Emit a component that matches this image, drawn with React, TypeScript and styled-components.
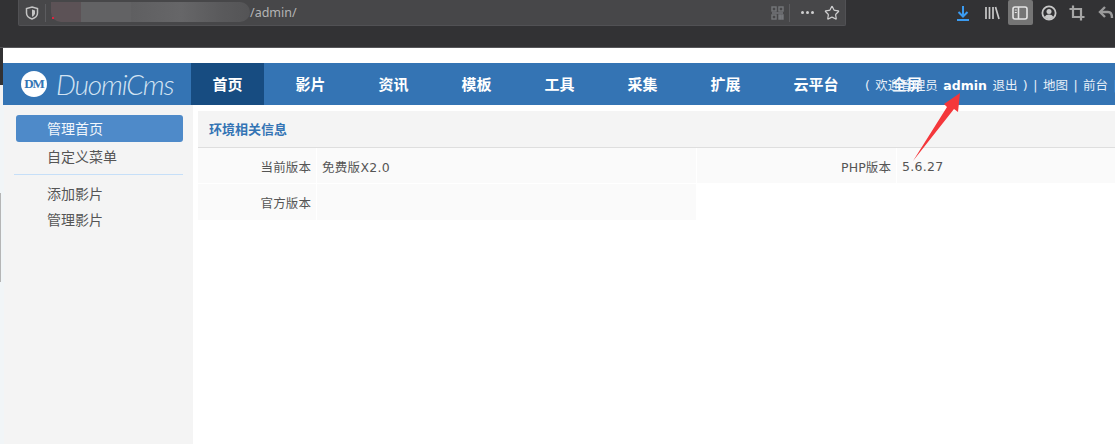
import React from "react"
import styled, { createGlobalStyle } from "styled-components"
import { Star } from "lucide-react"

const navItems = ["首页", "影片", "资讯", "模板", "工具", "采集", "扩展", "云平台", "全屏"]

export default function App() {
  return (
    <Page>
      <GlobalStyle />
      <BrowserBar>
        <UrlBox>
          <ShieldIcon />
          <UrlDivider />
          <BlurredHost />
          <UrlPath>/admin/</UrlPath>
          <QrIcon />
          <UrlDivider $right />
          <Dots>
            <i />
            <i />
            <i />
          </Dots>
          <StarSlot>
            <Star size={16} strokeWidth={1.8} color="#cfcfd0" />
          </StarSlot>
        </UrlBox>
        <Tools>
          <ToolButton>
            <svg width="18" height="18" viewBox="0 0 18 18" fill="none" stroke="#3b9bf0" strokeWidth="2">
              <path d="M9 2v10M4.500 8 9 12.500 13.500 8M3 16h12" />
            </svg>
          </ToolButton>
          <ToolButton>
            <svg width="18" height="18" viewBox="0 0 18 18" fill="none" stroke="#c8c8c8" strokeWidth="1.7">
              <path d="M3 3v12M6.500 3v12M10 3v12M12.500 3l3.500 12" />
            </svg>
          </ToolButton>
          <ToolButton $active>
            <svg width="18" height="18" viewBox="0 0 18 18" fill="none" stroke="#e4e4e4" strokeWidth="1.6">
              <rect x="2" y="3" width="14" height="12" rx="2" />
              <path d="M7.500 3v12" />
              <path d="M3.800 6h2M3.800 8.500h2" strokeWidth="1.2" />
            </svg>
          </ToolButton>
          <ToolButton>
            <svg width="18" height="18" viewBox="0 0 18 18">
              <circle cx="9" cy="9" r="6.600" fill="none" stroke="#c8c8c8" strokeWidth="1.8" />
              <circle cx="9" cy="7.400" r="2.500" fill="#c8c8c8" />
              <path d="M4.500 13.200c1-2 2.600-2.700 4.500-2.700s3.500.7 4.500 2.700L9 15.500z" fill="#c8c8c8" />
            </svg>
          </ToolButton>
          <ToolButton>
            <svg width="18" height="18" viewBox="0 0 18 18" fill="none" stroke="#a5a5a5" strokeWidth="2.2">
              <path d="M1.500 5H13v11.500M5 1.500V13h11.500" />
            </svg>
          </ToolButton>
          <ToolButton>
            <svg width="18" height="18" viewBox="0 0 18 18" fill="none" stroke="#9a9a9a" strokeWidth="2.400">
              <path d="M8 3 3 8l5 5" />
              <path d="M3.500 8H11c3 0 4 2 4 6" />
            </svg>
          </ToolButton>
        </Tools>
      </BrowserBar>

      <WhiteBand />
      <Header>
        <Logo>
          <LogoMark>DM</LogoMark>
          <LogoText>DuomiCms</LogoText>
        </Logo>
        <Nav>
          {navItems.map((item, i) => (
            <NavItem key={item} $active={i === 0}>
              {item}
            </NavItem>
          ))}
        </Nav>
        <UserLinks>
          ( 欢迎管理员 <strong>admin</strong> 退出 ) | 地图 | 前台 |
        </UserLinks>
      </Header>

      <Body>
        <Sidebar>
          <SideItem $active>管理首页</SideItem>
          <SideItem>自定义菜单</SideItem>
          <SideDivider />
          <SideItem>添加影片</SideItem>
          <SideItem>管理影片</SideItem>
        </Sidebar>
        <Main>
          <PanelTitle>环境相关信息</PanelTitle>
          <InfoGrid>
            <Label>当前版本</Label>
            <Value>免费版X2.0</Value>
            <Label>PHP版本</Label>
            <Value>5.6.27</Value>
            <Label>官方版本</Label>
            <Value />
          </InfoGrid>
        </Main>
      </Body>

      <EdgeDark />
      <EdgeLight />
      <EdgeGray />
      <Arrow viewBox="0 0 1115 444">
        <polygon points="913,161 947,107 944,104 960,93 958,112 954,109" fill="#f4373b" />
      </Arrow>
    </Page>
  )
}

function ShieldIcon() {
  return (
    <ShieldSlot>
      <svg width="14" height="14" viewBox="0 0 14 14">
        <path d="M7 1 12.500 2.500v4.500c0 3-2.500 5-5.500 6-3-1-5.500-3-5.500-6V2.500z" fill="none" stroke="#c4c4c4" strokeWidth="1.5" />
        <path d="M7 3.500 10 4.400v2.800c0 1.600-1.400 2.800-3 3.500z" fill="#c4c4c4" />
      </svg>
    </ShieldSlot>
  )
}

function QrIcon() {
  return (
    <QrSlot>
      <svg width="13" height="14" viewBox="0 0 13 14" fill="none" stroke="#75777b" strokeWidth="1.4">
        <rect x="1" y="1" width="4" height="4" />
        <rect x="8" y="1" width="4" height="4" />
        <rect x="1" y="9" width="4" height="4" />
        <path d="M8 9h1.500v1.500H8zM11 9h1v1.500h-1zM8 12h1.500v1H8zM11 12h1v1h-1zM1 7h11" />
      </svg>
    </QrSlot>
  )
}

const GlobalStyle = createGlobalStyle`
  html, body {
    margin: 0;
    padding: 0;
    background: #fff;
  }
  body {
    overflow: hidden;
    font-family: "DejaVu Sans", "Noto Sans CJK SC", sans-serif;
  }
`

const Page = styled.div`
  position: relative;
  width: 1115px;
  height: 444px;
  overflow: hidden;
  display: flex;
  flex-direction: column;
`

const BrowserBar = styled.div`
  flex: none;
  height: 48px;
  display: flex;
  align-items: flex-start;
  justify-content: space-between;
  padding-left: 18px;
  box-sizing: border-box;
  background: #323234;
  border-bottom: 1px solid #57575a;
`

const UrlBox = styled.div`
  width: 828px;
  height: 26px;
  box-sizing: border-box;
  display: flex;
  align-items: center;
  background: #474749;
  border: 1px solid #515154;
  border-top: none;
  border-radius: 0 0 2px 2px;
`

const ShieldSlot = styled.span`
  display: flex;
  margin-left: 6px;
  margin-right: 6px;
`

const UrlDivider = styled.span<{ $right?: boolean }>`
  width: 1px;
  height: 18px;
  background: #5c5c5f;
  margin-left: ${(p) => (p.$right ? "5px" : "0")};
`

const BlurredHost = styled.span`
  position: relative;
  width: 199px;
  height: 20px;
  margin-left: 5px;
  margin-bottom: 2px;
  border-radius: 0 10px 10px 10px;
  background: linear-gradient(90deg, #5c5256 0, #5c5256 30px, #626264 30px, #626264 80px, #5f5f61 80px, #666668 130px, #5a5a5c 170px, #545456 100%);

  &::before {
    content: "";
    position: absolute;
    left: 1px;
    top: 15px;
    width: 2px;
    height: 2px;
    background: #e0233f;
  }
`

const UrlPath = styled.span`
  flex: 1;
  font: 12.500px "Noto Sans", sans-serif;
  color: #b4b4b5;
  margin-bottom: 1px;
`

const QrSlot = styled.span`
  display: flex;
`

const Dots = styled.span`
  display: flex;
  gap: 2px;
  margin-left: 11px;

  i {
    width: 3px;
    height: 3px;
    border-radius: 50%;
    background: #cfcfd0;
  }
`

const StarSlot = styled.span`
  display: flex;
  margin-left: 10px;
  margin-right: 5px;
`

const Tools = styled.div`
  display: flex;
  align-items: center;
  padding-right: 0;
  height: 25px;
  margin-right: -3px;
`

const ToolButton = styled.span<{ $active?: boolean }>`
  width: 25px;
  height: 25px;
  margin-left: 3.500px;
  display: flex;
  align-items: center;
  justify-content: center;
  border-radius: 2px;
  background: ${(p) => (p.$active ? "#757575" : "transparent")};
`

const WhiteBand = styled.div`
  flex: none;
  height: 15px;
`

const Header = styled.header`
  position: relative;
  flex: none;
  height: 42px;
  margin-left: 3px;
  display: flex;
  background: #3474b4;
  color: #fff;
`

const Logo = styled.div`
  width: 188px;
  flex: none;
  display: flex;
  align-items: center;
  padding-left: 18px;
  box-sizing: border-box;
`

const LogoMark = styled.span`
  flex: none;
  width: 26px;
  height: 26px;
  border-radius: 50%;
  background: #fff;
  color: #3474b4;
  font: bold 13px "Liberation Serif", serif;
  letter-spacing: -1px;
  display: flex;
  align-items: center;
  justify-content: center;
`

const LogoText = styled.span`
  margin-left: 9px;
  font: italic 300 28px Lato, "Open Sans", sans-serif;
  letter-spacing: -1.100px;
  color: #d3e3f2;
  white-space: nowrap;
`

const Nav = styled.nav`
  display: flex;
`

const NavItem = styled.span<{ $active?: boolean }>`
  padding: 0 21.500px 2px;
  margin-right: 10px;
  display: flex;
  align-items: center;
  font: bold 15px "Noto Sans CJK SC", sans-serif;
  color: #fff;
  background: ${(p) => (p.$active ? "#174c81" : "transparent")};
  white-space: nowrap;
`

const UserLinks = styled.div`
  position: absolute;
  left: 862px;
  top: 0;
  height: 100%;
  line-height: 46px;
  white-space: pre;
  font-size: 12.500px;
  word-spacing: 1.500px;
  color: #e8f0f8;

  strong {
    font-size: 12.500px;
    color: #fff;
  }
`

const Body = styled.div`
  flex: 1;
  display: flex;
  min-height: 0;
`

const Sidebar = styled.aside`
  flex: none;
  width: 193px;
  box-sizing: border-box;
  padding: 10px 10px 0 16px;
  background: #f4f4f4;
  box-shadow: inset 4px 0 #f1f5f7;
`

const SideItem = styled.div<{ $active?: boolean }>`
  height: ${(p) => (p.$active ? "27px" : "26px")};
  margin-bottom: ${(p) => (p.$active ? "2px" : "0")};
  box-sizing: border-box;
  padding: 0 0 2px 31px;
  display: flex;
  align-items: center;
  font: 14px "Noto Sans CJK SC", sans-serif;
  color: ${(p) => (p.$active ? "#f2f7fc" : "#555")};
  background: ${(p) => (p.$active ? "#4e8ac9" : "transparent")};
  border-radius: 3px;
`

const SideDivider = styled.div`
  height: 1px;
  margin: 4px 0 6px -2px;
  background: #c6dff8;
`

const Main = styled.main`
  flex: 1;
  min-width: 0;
  padding: 6px 0 0 5px;
`

const PanelTitle = styled.h2`
  margin: 0;
  height: 37px;
  box-sizing: border-box;
  padding: 0 0 2px 11px;
  display: flex;
  align-items: center;
  font: bold 13px "Noto Sans CJK SC", sans-serif;
  color: #3474b4;
  background: #f4f4f4;
  border-bottom: 1px solid #dedede;
`

const InfoGrid = styled.div`
  display: grid;
  grid-template-columns: 118px 379px 199px 1fr;
  grid-template-rows: 35px 36px;
  gap: 1px;
`

const Label = styled.div`
  display: flex;
  align-items: center;
  justify-content: flex-end;
  padding: 1px 5px 0 0;
  font: 12.500px "DejaVu Sans", "Noto Sans CJK SC", sans-serif;
  letter-spacing: 0.100px;
  color: #555;
  background: #fafafa;
`

const Value = styled.div`
  display: flex;
  align-items: center;
  padding: 1px 0 0 5px;
  font: 12.500px "DejaVu Sans", "Noto Sans CJK SC", sans-serif;
  letter-spacing: 0.300px;
  color: #555;
  background: #fafafa;
`

const EdgeDark = styled.div`
  position: absolute;
  left: 0;
  top: 48px;
  width: 3px;
  height: 37px;
  background: #323234;
`

const EdgeLight = styled.div`
  position: absolute;
  left: 0;
  top: 85px;
  width: 3px;
  height: 20px;
  background: #f3f3f3;
`

const EdgeGray = styled.div`
  position: absolute;
  left: 0;
  top: 193px;
  width: 1px;
  height: 89px;
  background: #b5b5b5;
`

const Arrow = styled.svg`
  position: absolute;
  inset: 0;
  width: 1115px;
  height: 444px;
  pointer-events: none;
`
